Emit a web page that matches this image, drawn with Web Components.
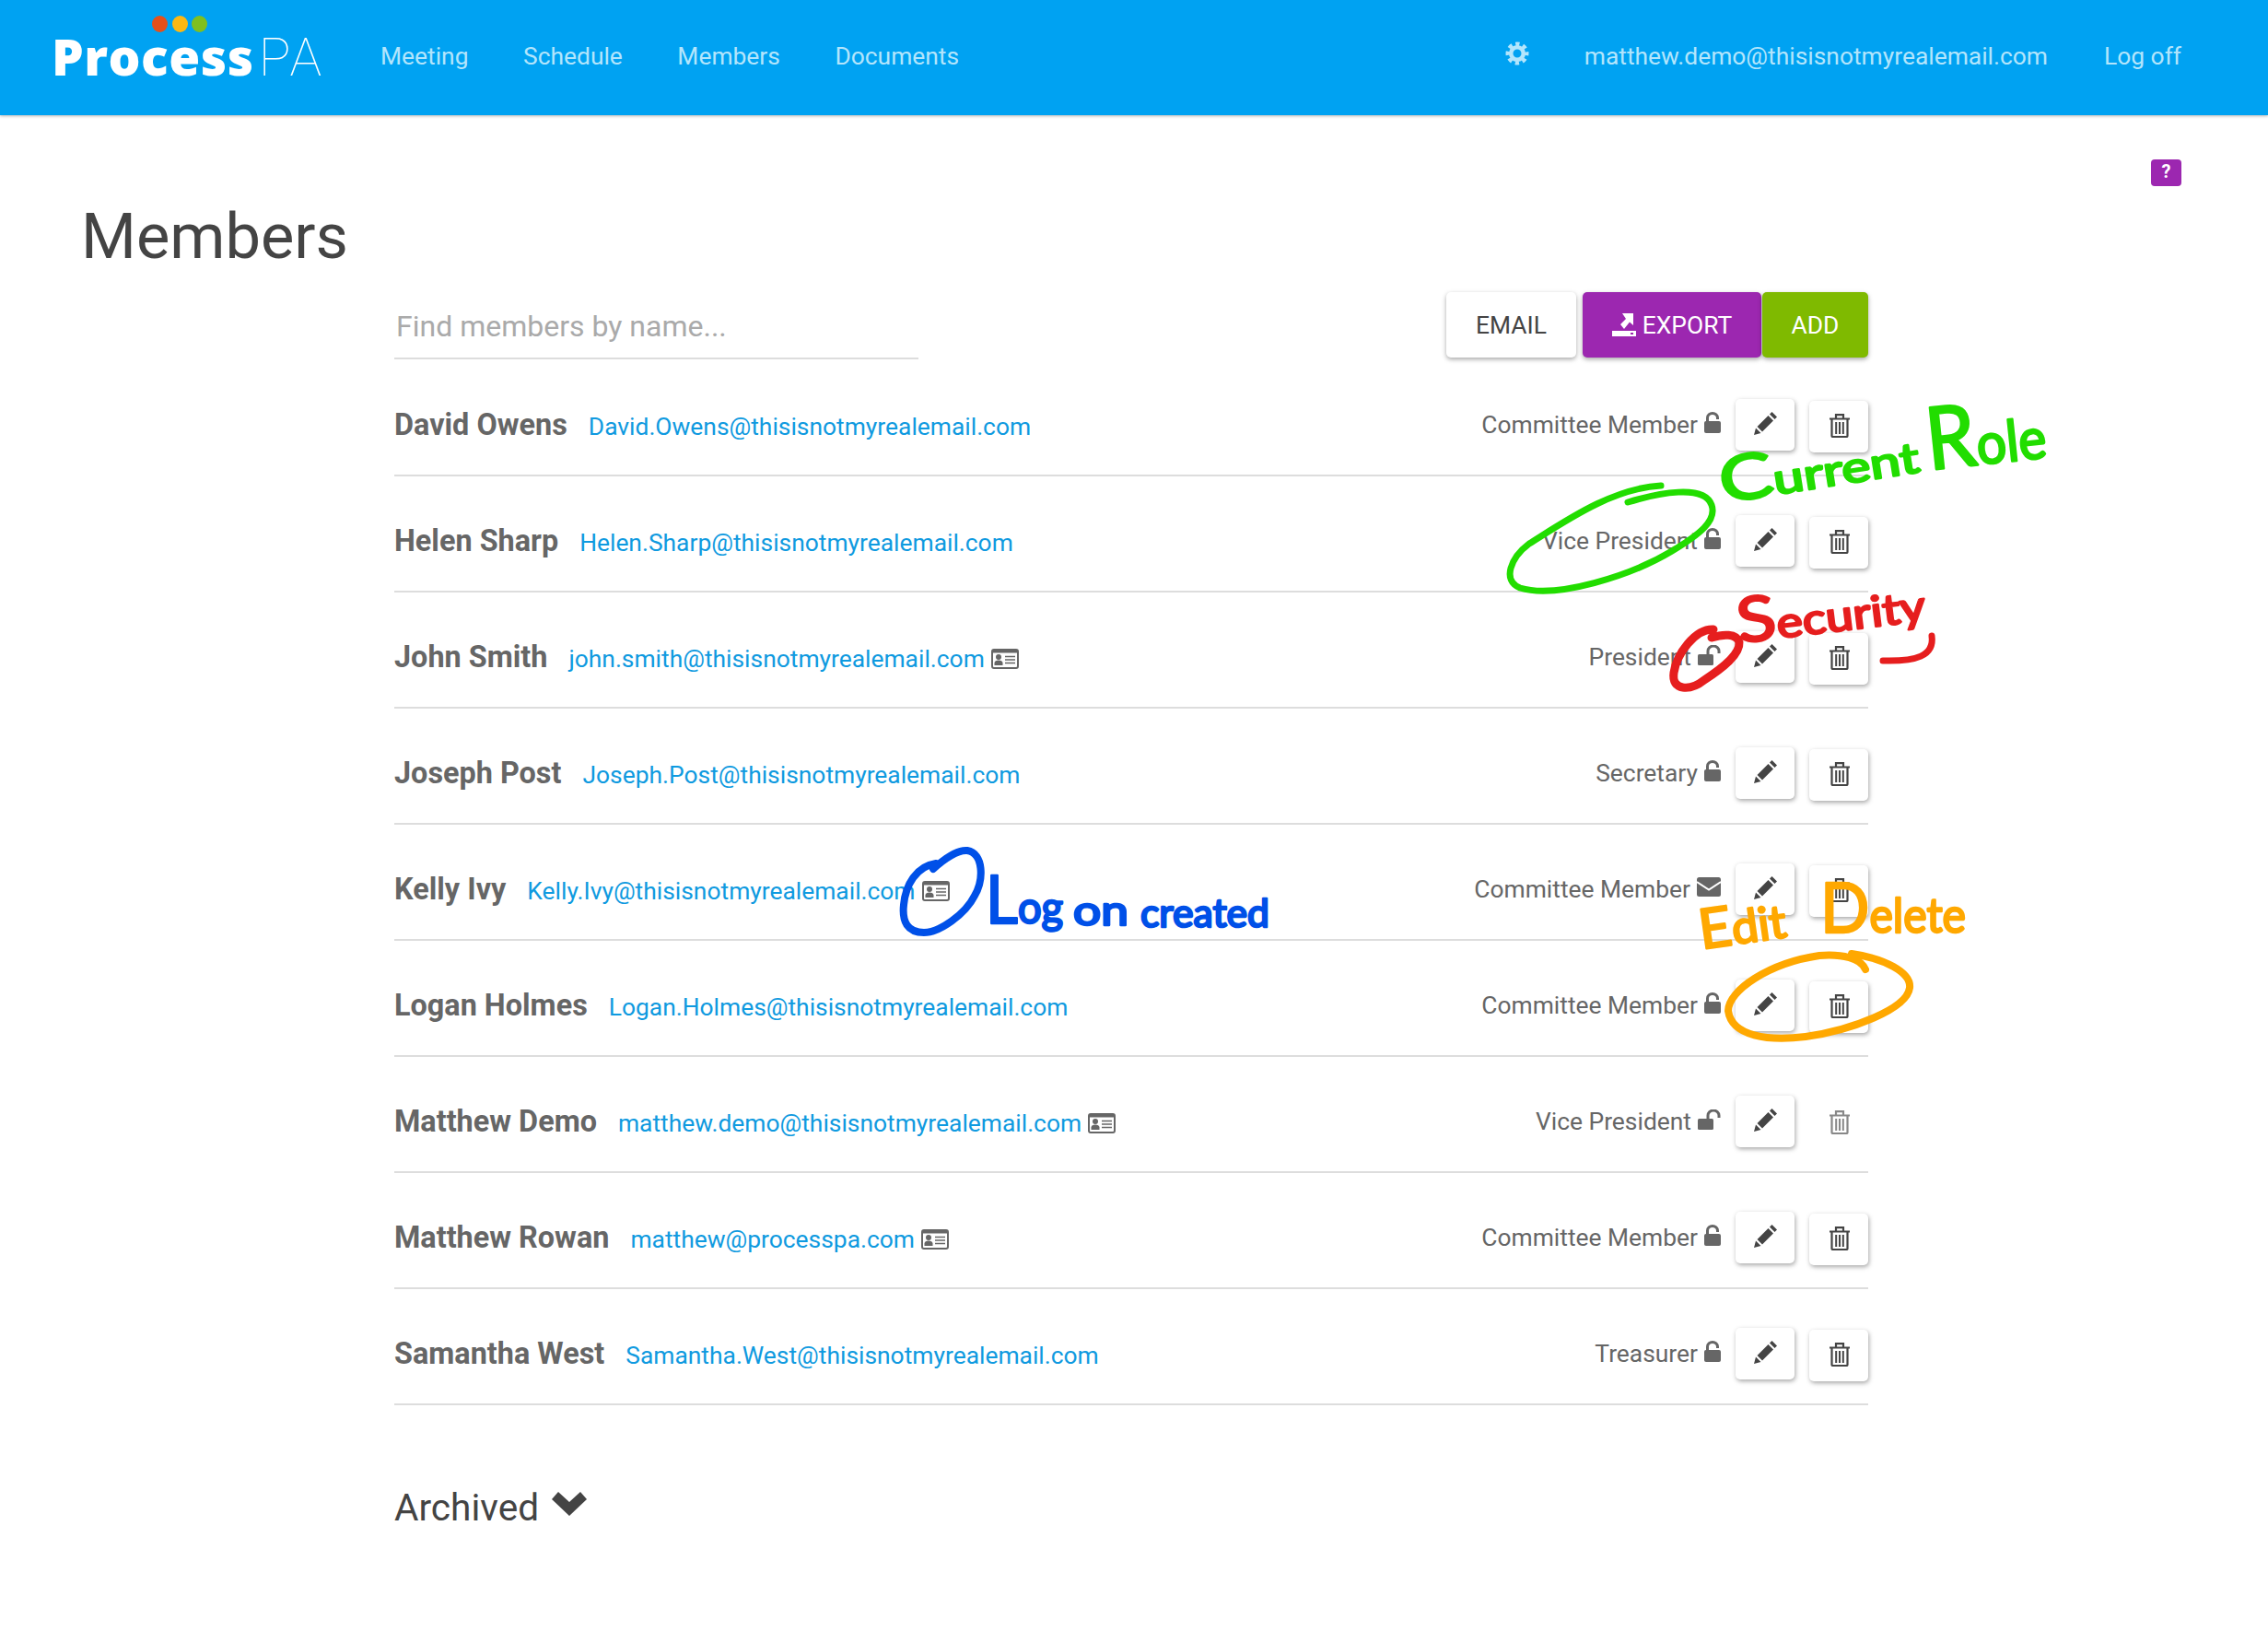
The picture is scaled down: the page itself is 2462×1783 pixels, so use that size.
<!DOCTYPE html>
<html>
<head>
<meta charset="utf-8">
<title>Members</title>
<style>
    html, body { margin: 0; background: #fff; }
    body { position: relative; width: 2462px; height: 1783px; overflow: hidden; font-family: Roboto, "Liberation Sans", sans-serif; }
</style>
</head>
<body>
<pa-header></pa-header>
<pa-page>
    <member-row email="David.Owens@thisisnotmyrealemail.com" role="Committee Member" sec="lock">David Owens</member-row>
    <member-row email="Helen.Sharp@thisisnotmyrealemail.com" role="Vice President" sec="lock">Helen Sharp</member-row>
    <member-row email="john.smith@thisisnotmyrealemail.com" role="President" sec="open" card>John Smith</member-row>
    <member-row email="Joseph.Post@thisisnotmyrealemail.com" role="Secretary" sec="lock">Joseph Post</member-row>
    <member-row email="Kelly.Ivy@thisisnotmyrealemail.com" role="Committee Member" sec="mail" card>Kelly Ivy</member-row>
    <member-row email="Logan.Holmes@thisisnotmyrealemail.com" role="Committee Member" sec="lock">Logan Holmes</member-row>
    <member-row email="matthew.demo@thisisnotmyrealemail.com" role="Vice President" sec="open" card nodelete>Matthew Demo</member-row>
    <member-row email="matthew@processpa.com" role="Committee Member" sec="lock" card>Matthew Rowan</member-row>
    <member-row email="Samantha.West@thisisnotmyrealemail.com" role="Treasurer" sec="lock">Samantha West</member-row>
</pa-page>
<ink-layer></ink-layer>

<script>
const icons = {
    pencil: `<svg width="25" height="25" viewBox="0 0 25 25" fill="#444"><path d="M0 25l2-7.500 5.500 5.500z"/><path d="M3.500 16L15.500 4l5.500 5.500L9 21.500z"/><path d="M17 2.500L19.500 0 25 5.500 22.500 8z"/></svg>`,
    trash: `<svg width="22" height="26" viewBox="0 0 22 26" fill="none" stroke="currentColor" stroke-width="2.200"><path d="M0 5.500h22M7 5V1.200h8V5"/><path d="M2.500 6v18a1 1 0 0 0 1 1h15a1 1 0 0 0 1-1V6"/><path d="M7.200 9v13M11 9v13M14.800 9v13" stroke-width="2"/></svg>`,
    lock: `<svg width="18" height="23" viewBox="0 0 18 23"><rect y="10" width="18" height="13" rx="2" fill="#666"/><path d="M3.500 11V6.500a5.500 5 0 0 1 11 0V8" fill="none" stroke="#666" stroke-width="3"/></svg>`,
    open: `<svg width="25" height="22" viewBox="0 0 25 22"><rect y="10" width="17" height="12" rx="1.500" fill="#666"/><path d="M11 11V6.500a5.500 5 0 0 1 12 0V9" fill="none" stroke="#666" stroke-width="3"/></svg>`,
    mail: `<svg width="26" height="21" viewBox="0 0 26 21"><rect width="26" height="21" rx="2.500" fill="#666"/><path d="M0 5l13 8.500L26 5" fill="none" stroke="#fff" stroke-width="2"/></svg>`,
    card: `<svg width="30" height="22" viewBox="0 0 30 22"><rect x="1" y="1" width="28" height="20" rx="2" fill="none" stroke="#666" stroke-width="2"/><rect x="1" y="1" width="28" height="3.500" fill="#666"/><circle cx="8" cy="9" r="3" fill="#666"/><path d="M3.500 18v-2.500c0-2 2-3 4.500-3s4.500 1 4.500 3V18z" fill="#666"/><path d="M15 8.500h11M15 12h11M15 15.500h11" stroke="#666" stroke-width="1.600"/></svg>`,
    gear: `<svg width="26" height="26" viewBox="0 0 26 26" fill="none" stroke="#b3e5fc"><circle cx="13" cy="13" r="6.800" stroke-width="4.600"/><circle cx="13" cy="13" r="10.300" stroke-width="4.400" stroke-dasharray="4.300 3.790" stroke-dashoffset="2.150"/></svg>`,
    exportIcon: `<svg width="26" height="25" viewBox="0 0 26 25" fill="#fff"><path d="M0 19h26v6H0zM20 21v2h3v-2z" fill-rule="evenodd"/><path d="M11 0h12v13l-4-3.500-6 7.500-4-5 6-6z"/></svg>`,
    chevron: `<svg width="38" height="26" viewBox="0 0 38 26" fill="#444"><path d="M0 8l7-8 12 11L31 0l7 8-19 18z"/></svg>`
};

class PaHeader extends HTMLElement
{
    constructor()
    {
        super();
        this.attachShadow({mode: 'open'});
    }

    connectedCallback()
    {
        this.shadowRoot.innerHTML =
        `<style>
            :host {
                display: flex;
                align-items: center;
                box-sizing: border-box;
                height: 125px;
                padding: 0 94px 4px 56px;
                background-color: #00a2f2;
                box-shadow: 0 1px 3px rgba(0, 0, 0, .3);
                font: 400 26.400px Roboto, sans-serif;
                color: #b3e5fc;
            }
            .logo {
                position: relative;
                width: 357px;
                font: 800 55px/70px "Open Sans", sans-serif;
                letter-spacing: .5px;
                color: #fff;
                margin-top: 2px;
            }
            .logo i {
                font: 100 58px/70px Roboto, sans-serif;
                letter-spacing: 3px;
                margin-left: 5px;
            }
            .dots {
                position: absolute;
                left: 109px;
                top: -9px;
                display: flex;
                gap: 4.500px;
            }
            .dots b {
                width: 17px;
                height: 18px;
                border-radius: 50%;
            }
            nav {
                display: flex;
                gap: 59.500px;
            }
            .right {
                margin-left: auto;
                display: flex;
                align-items: center;
            }
            svg {
                display: block;
                margin: -6px 60px 0 0;
            }
            .off {
                margin-left: 61px;
            }
        </style>
        <div class="logo">Process<i>PA</i><span class="dots"><b style="background:#e5501a"></b><b style="background:#fdb813"></b><b style="background:#7fbf1f"></b></span></div>
        <nav><span>Meeting</span><span>Schedule</span><span>Members</span><span>Documents</span></nav>
        <div class="right">${icons.gear}<span>matthew.demo@thisisnotmyrealemail.com</span><span class="off">Log off</span></div>`;
    }
}

class PaPage extends HTMLElement
{
    constructor()
    {
        super();
        this.attachShadow({mode: 'open'});
    }

    connectedCallback()
    {
        this.shadowRoot.innerHTML =
        `<style>
            :host {
                display: block;
                position: relative;
                font-family: Roboto, sans-serif;
                color: #444;
            }
            .help {
                position: absolute;
                right: 94px;
                top: 48px;
                width: 33px;
                height: 29px;
                border-radius: 4px;
                background: #9c27b0;
                color: #fff;
                font: 700 20px/27px Roboto, sans-serif;
                text-align: center;
            }
            h1 {
                margin: 0;
                padding: 92px 0 0 88px;
                font: 400 68.600px/80px Roboto, sans-serif;
                color: #444;
            }
            main {
                width: 1600px;
                margin-left: 428px;
            }
            .tools {
                display: flex;
                align-items: flex-start;
                height: 74px;
                margin-top: 20px;
            }
            .find {
                box-sizing: border-box;
                width: 569px;
                height: 73px;
                padding: 18px 0 0 2px;
                border-bottom: 2px solid #ddd;
                font-size: 32px;
                color: #aaa;
            }
            .btns {
                margin-left: auto;
                display: flex;
            }
            .btn {
                display: flex;
                align-items: center;
                justify-content: center;
                gap: 7px;
                box-sizing: border-box;
                height: 71px;
                border-radius: 5px;
                font-size: 26.400px;
                box-shadow: 0 2px 5px rgba(0, 0, 0, .35);
            }
            .email { width: 141px; margin-right: 7px; background: #fff; color: #444; }
            .export { width: 194px; margin-right: 1px; background: #9c27b0; color: #fff; }
            .add { width: 115px; background: #7fba00; color: #fff; }
            .archived {
                display: flex;
                align-items: flex-start;
                gap: 14px;
                margin-top: 88px;
                font-size: 40.600px;
                line-height: 47px;
                color: #444;
            }
            .archived svg {
                margin-top: 6px;
            }
        </style>
        <div class="help">?</div>
        <h1>Members</h1>
        <main>
            <div class="tools">
                <div class="find">Find members by name...</div>
                <div class="btns">
                    <div class="btn email">EMAIL</div>
                    <div class="btn export">${icons.exportIcon}EXPORT</div>
                    <div class="btn add">ADD</div>
                </div>
            </div>
            <slot></slot>
            <div class="archived">Archived ${icons.chevron}</div>
        </main>`;
    }
}

class MemberRow extends HTMLElement
{
    constructor()
    {
        super();
        this.attachShadow({mode: 'open'});
    }

    connectedCallback()
    {
        const card = this.hasAttribute('card') ? `<span class="card">${icons.card}</span>` : '';
        const del = this.hasAttribute('nodelete')
            ? `<div class="act del off">${icons.trash}</div>`
            : `<div class="act del">${icons.trash}</div>`;

        this.shadowRoot.innerHTML =
        `<style>
            :host {
                display: flex;
                align-items: center;
                box-sizing: border-box;
                height: 126px;
                padding-top: 18px;
                border-bottom: 2px solid #ddd;
                font-family: Roboto, sans-serif;
            }
            .name {
                font-size: 32.400px;
                font-weight: 700;
                color: #666;
            }
            .who {
                display: flex;
                align-items: baseline;
                gap: 23px;
                margin-bottom: 3px;
            }
            .mail {
                display: flex;
                align-items: center;
                gap: 7px;
                font-size: 26.400px;
                color: #0f9ae0;
            }
            .card svg {
                display: block;
                margin-top: 1px;
            }
            .role {
                margin-left: auto;
                margin-bottom: 3px;
                display: flex;
                align-items: center;
                gap: 7px;
                font-size: 26.400px;
                color: #666;
            }
            .role svg {
                display: block;
                margin-top: -4px;
            }
            .act {
                display: flex;
                align-items: center;
                justify-content: center;
                box-sizing: border-box;
                width: 64px;
                height: 56px;
                border-radius: 5px;
                background: #fff;
                color: #444;
                box-shadow: 1px 2px 5px rgba(0, 0, 0, .35);
            }
            .edit {
                margin-left: 16px;
                margin-bottom: 2px;
                padding-bottom: 4px;
            }
            .del {
                margin-left: 16px;
                margin-top: 2px;
                padding: 0 0 2px 2px;
            }
            .del.off {
                box-shadow: none;
                color: #888;
            }
        </style>
        <div class="who">
            <span class="name"><slot></slot></span>
            <span class="mail">${this.getAttribute('email')}${card}</span>
        </div>
        <div class="role">${this.getAttribute('role')}${icons[this.getAttribute('sec')]}</div>
        <div class="act edit">${icons.pencil}</div>
        ${del}`;
    }
}

// the marker scribbles sit on top of the page, so this one layer is absolute
class InkLayer extends HTMLElement
{
    constructor()
    {
        super();
        this.attachShadow({mode: 'open'});
    }

    connectedCallback()
    {
        this.shadowRoot.innerHTML =
        `<style>
            :host {
                display: block;
                position: absolute;
                left: 0;
                top: 0;
                pointer-events: none;
            }
            svg {
                display: block;
            }
            path {
                fill: none;
                stroke-linecap: round;
                stroke-linejoin: round;
            }
            text {
                font-family: Lato, sans-serif;
                stroke-linejoin: round;
                stroke-width: 2.500px;
            }
            .green { color: #22dd00; }
            .red { color: #e61e1e; }
            .blue { color: #0050e8; }
            .orange { color: #ffa800; }
            g { stroke: currentColor; fill: currentColor; }
        </style>
        <svg width="2462" height="1783" viewBox="0 0 2462 1783">
            <g class="green">
                <path stroke-width="7" d="M1803 527C1750 530 1700 565 1660 590C1640 605 1630 630 1650 638C1690 650 1770 625 1815 598C1845 580 1864 565 1858 548C1850 525 1800 535 1767 545"/>
                <text x="1870" y="546" font-size="46" textLength="218" lengthAdjust="spacingAndGlyphs" transform="rotate(-9 1870 546)"><tspan font-size="68">C</tspan>urrent</text>
                <text x="2094" y="510" font-size="62" textLength="130" lengthAdjust="spacingAndGlyphs" transform="rotate(-6 2094 510)"><tspan font-size="94">R</tspan>ole</text>
            </g>
            <g class="red">
                <path stroke-width="9" d="M1860 683C1840 682 1820 710 1817 730C1814 750 1835 750 1850 738C1870 725 1889 710 1888 697C1885 687 1870 688 1858 692"/>
                <text x="1888" y="698" font-size="46" textLength="205" lengthAdjust="spacingAndGlyphs" transform="rotate(-7 1888 698)"><tspan font-size="68">S</tspan>ecurity</text>
                <path stroke-width="7" d="M2097 690C2100 712 2080 718 2044 717"/>
            </g>
            <g class="blue">
                <path stroke-width="8" d="M1013 943C1025 932 1040 922 1050 923C1068 926 1068 955 1058 972C1048 992 1020 1012 1003 1012C985 1012 979 1000 981 982C983 960 995 940 1016 937"/>
                <text x="1070" y="1002" font-size="48" textLength="84" lengthAdjust="spacingAndGlyphs"><tspan font-size="72">L</tspan>og</text>
                <text x="1165" y="1004" font-size="44" textLength="60" lengthAdjust="spacingAndGlyphs">on</text>
                <text x="1238" y="1006" font-size="42" textLength="140" lengthAdjust="spacingAndGlyphs">created</text>
            </g>
            <g class="orange">
                <path stroke-width="8" d="M2010 1035C2045 1040 2075 1055 2073 1072C2070 1095 2010 1118 1960 1125C1920 1130 1880 1125 1876 1097C1876 1075 1920 1045 1975 1037C2000 1035 2020 1040 2025 1052"/>
                <text x="1847" y="1030" font-size="50" textLength="95" lengthAdjust="spacingAndGlyphs" transform="rotate(-8 1847 1030)"><tspan font-size="60">E</tspan>dit</text>
                <text x="1976" y="1012" font-size="52" textLength="158" lengthAdjust="spacingAndGlyphs"><tspan font-size="76">D</tspan>elete</text>
            </g>
        </svg>`;
    }
}

window.customElements.define('pa-header', PaHeader);
window.customElements.define('pa-page', PaPage);
window.customElements.define('member-row', MemberRow);
window.customElements.define('ink-layer', InkLayer);
</script>
</body>
</html>
